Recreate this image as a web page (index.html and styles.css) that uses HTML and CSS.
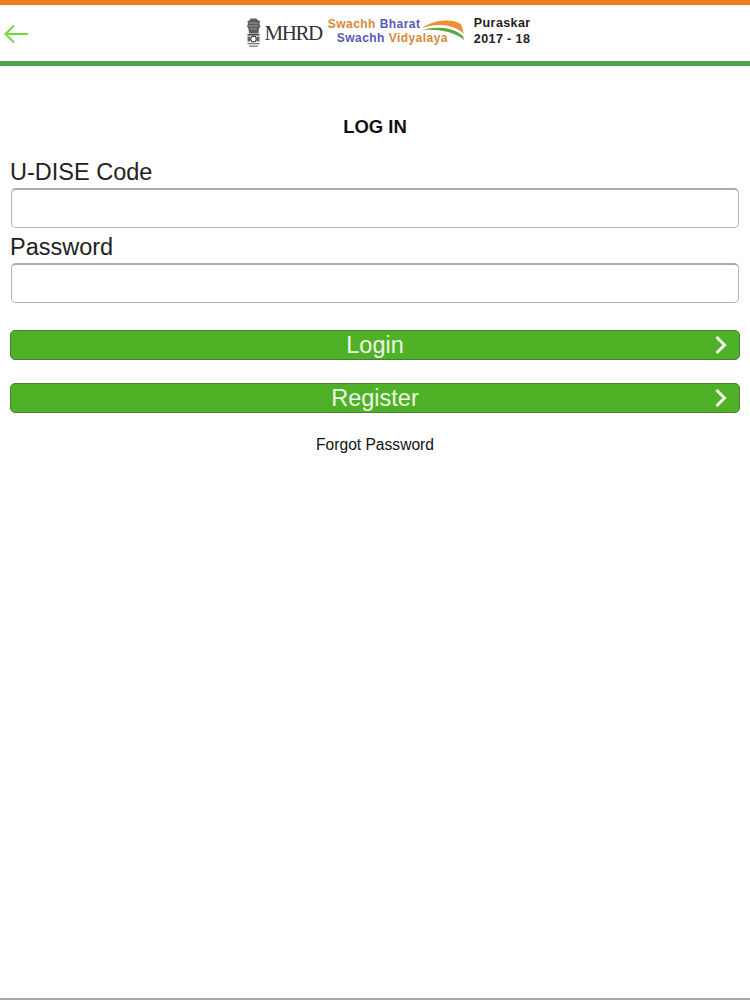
FILE: index.html
```html
<!DOCTYPE html>
<html lang="en">
<head>
  <meta charset="UTF-8" />
  <meta name="viewport" content="width=device-width, initial-scale=1.0" />
  <title>Log In</title>
  <link rel="stylesheet" href="styles.css">
</head>
<body>
  <header class="topbar">
    <a class="back" href="#" aria-label="Back">
      <svg width="26" height="20" viewBox="0 0 26 20"><path d="M25 10H2.500M11 1.500L2.500 10l8.500 8.500" fill="none" stroke="#6fdc3c" stroke-width="2"/></svg>
    </a>
    <div class="logos">
      <svg class="emblem" width="15" height="30" viewBox="0 0 15 30">
        <path d="M4.500 0.500h6l1 1.500 2.500 1-.5 3 1 2-1.500 3-.5 4.500H3L2.500 11 1 8l1-2-.5-3L4 2z" fill="#5c5c5c"/>
        <path d="M3 5h9M2.500 8h10M4 11h7" stroke="#b5b5b5" stroke-width=".7"/>
        <rect x="1.500" y="16" width="12" height="1.500" fill="#444"/>
        <circle cx="7.500" cy="21" r="2.800" fill="none" stroke="#444" stroke-width="1.200"/>
        <path d="M1.500 18.500H4v5H1.500zM11 18.500h2.500v5H11z" fill="#666"/>
        <path d="M1.500 25h12v1.300h-12zM3 27.500h9v1.300H3z" fill="#777"/>
      </svg>
      <span class="mhrd">MHRD</span>
      <div class="swachh">
        <div class="swachh-line"><span class="orange">Swachh</span> <span class="blue">Bharat</span></div>
        <div class="swachh-line second"><span class="blue">Swachh</span> <span class="orange">Vidyalaya</span></div>
        <svg class="swoosh" width="44" height="22" viewBox="0 0 44 22">
          <path d="M1 9C12 1 30-1 40 5l3 10C33 5 16 4 1 9z" fill="#ef8f35"/>
          <path d="M1 11C16 7 32 8 42 17l1 4C33 12 16 10 1 11z" fill="#5aa845"/>
        </svg>
      </div>
      <div class="puraskar">Puraskar<br>2017 - 18</div>
    </div>
  </header>

  <main class="content">
    <h1 class="title">LOG IN</h1>
    <label class="field-label" for="code">U-DISE Code</label>
    <input class="field" id="code" type="text">
    <label class="field-label" for="password">Password</label>
    <input class="field" id="password" type="password">

    <button class="btn btn-login">Login
      <svg class="chevron" width="14" height="20" viewBox="0 0 14 20"><path d="M2.500 2l8 8-8 8" fill="none" stroke="#f2f8ec" stroke-width="3"/></svg>
    </button>
    <button class="btn btn-register">Register
      <svg class="chevron" width="14" height="20" viewBox="0 0 14 20"><path d="M2.500 2l8 8-8 8" fill="none" stroke="#f2f8ec" stroke-width="3"/></svg>
    </button>
    <a class="forgot" href="#">Forgot Password</a>
  </main>
</body>
</html>
```

FILE: styles.css
```css
* {
  box-sizing: border-box;
}

body {
  margin: 0;
  height: 1000px;
  overflow: hidden;
  display: flex;
  flex-direction: column;
  font-family: "Liberation Sans", Arial, sans-serif;
  color: #111;
  background: #fff;
  border-bottom: 2px solid #a9a9a9;
}

.topbar {
  height: 66px;
  display: flex;
  align-items: center;
  justify-content: center;
  position: relative;
  background: #fff;
  border-top: 5px solid #ee7d1e;
  border-bottom: 5px solid #4fa44c;
}

.back {
  position: absolute;
  left: 3px;
  top: 19px;
  display: flex;
}

.logos {
  display: flex;
  align-items: center;
  margin-left: 27px;
}

.emblem {
  margin-right: 3px;
}

.mhrd {
  font-family: "Liberation Serif", serif;
  font-size: 21px;
  letter-spacing: -1.4px;
  color: #333;
  margin-right: 6px;
}

.swachh {
  position: relative;
  width: 137px;
  height: 30px;
  margin-top: -2px;
  font-size: 12px;
  font-weight: bold;
  letter-spacing: 0.45px;
  line-height: 14px;
  white-space: nowrap;
}

.swachh-line.second {
  margin-left: 9px;
}

.orange {
  color: #d9873a;
}

.blue {
  color: #5a57b5;
}

.swoosh {
  position: absolute;
  left: 93px;
  top: 2px;
}

.puraskar {
  margin-left: 9px;
  margin-top: -4px;
  font-size: 12.500px;
  font-weight: bold;
  letter-spacing: 0.4px;
  line-height: 16px;
  color: #222;
}

.content {
  display: flex;
  flex-direction: column;
  padding: 0 10px;
}

.title {
  margin: 51px 0 0;
  font-size: 18.500px;
  line-height: 20px;
  font-weight: bold;
  text-align: center;
  color: #111;
}

.field-label {
  font-size: 23.500px;
  line-height: 27px;
  margin-top: 22px;
  color: #222;
}

.field-label + .field {
  margin-top: 2px;
}

.field {
  display: block;
  height: 40px;
  width: 728px;
  margin-left: 1px;
  padding: 0 8px;
  background: #fff;
  border: 1px solid #b5b5b5;
  border-top: 2px solid #aaa;
  border-radius: 5px;
  outline: none;
}

.field + .field-label {
  margin-top: 6px;
}

.btn {
  position: relative;
  height: 30px;
  width: 730px;
  padding: 0;
  font-family: inherit;
  font-size: 23.500px;
  line-height: 28px;
  text-align: center;
  color: #eef6e6;
  background: #4eb126;
  border: 1px solid #4d7a3d;
  border-radius: 5px;
}

.btn-login {
  margin-top: 27px;
}

.btn-register {
  margin-top: 23px;
}

.chevron {
  position: absolute;
  right: 11px;
  top: 4px;
}

.forgot {
  margin-top: 22px;
  font-size: 15.600px;
  line-height: 20px;
  text-align: center;
  color: #111;
  text-decoration: none;
}
```
